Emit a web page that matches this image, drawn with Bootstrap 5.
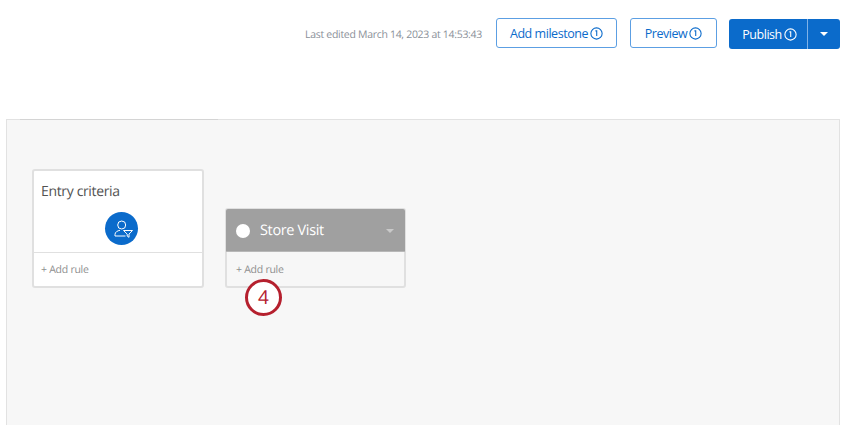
<!DOCTYPE html>
<html lang="en">
<head>
  <meta charset="UTF-8">
  <title>Journey editor</title>
  <link rel="stylesheet" href="https://cdn.jsdelivr.net/npm/bootstrap@5.3.3/dist/css/bootstrap.min.css">
  <style>
    html, body { height: 425px; overflow: hidden; }
    body { background: #fff; font-family: "Open Sans", "Noto Sans", sans-serif; color: #525252; text-rendering: geometricPrecision; }
    .top-bar { height: 119px; padding: 18px 10px 0 0; align-items: flex-start; }
    .edited-text { font-size: 10.5px; letter-spacing: -0.3px; color: #8a9099; margin-right: 14px; line-height: 34px; }
    .tool-btn { height: 30px; padding: 2px 0 0; font-size: 12.5px; letter-spacing: -0.45px; color: #0b6bcb; background: #fff; border: 1px solid #5c9fe3; border-radius: 3px; display: flex; align-items: center; justify-content: center; gap: 2px; }
    .tool-btn:hover { color: #0b6bcb; background: #fff; border-color: #5c9fe3; }
    .info-ico { margin-top: -2px; }
    .btn-milestone { width: 121px; margin-right: 13px; }
    .btn-preview { width: 87px; margin-right: 12px; }
    .publish-group { margin-top: 1px; height: 30px; }
    .publish-main, .publish-caret { background: #0b6bcb; border: 0; color: #fff; height: 30px; font-size: 12.5px; letter-spacing: -0.45px; padding: 2px 0 0; display: flex; align-items: center; justify-content: center; }
    .publish-main:hover, .publish-caret:hover { background: #0b6bcb; color: #fff; }
    .publish-main { width: 79px; gap: 2px; padding-left: 3px; border-radius: 3px 0 0 3px; border-right: 1px solid #7fb2e8; }
    .publish-caret { width: 32px; padding: 0; border-radius: 0 3px 3px 0; }
    .caret-down { width: 0; height: 0; border-left: 4px solid transparent; border-right: 4px solid transparent; border-top: 4px solid #fff; }
    .canvas-area { position: relative; margin: 0 10px 0 6px; height: 306px; background: #f7f7f7; border: 1px solid #e2e2e2; border-bottom: 0; }
    .tab-line { position: absolute; left: 13px; top: -1px; width: 198px; height: 1px; background: #d4d4d4; }
    .flow-node { position: absolute; border: 2px solid #e0e0e0; border-radius: 3px; }
    .node-entry { left: 25px; top: 49px; width: 172px; height: 119px; background: #fff; }
    .node-visit { left: 218px; top: 88px; width: 181px; height: 80px; background: #f7f7f7; }
    .entry-head { height: 82px; padding: 11px 7px 0; border-bottom: 1px solid #e0e0e0; }
    .entry-title { font-size: 14px; letter-spacing: -0.35px; line-height: 20px; color: #525252; }
    .entry-icon { width: 33px; height: 33px; border-radius: 50%; background: #0b6bcb; margin: 10px 0 0 64px; display: flex; align-items: center; justify-content: center; }
    .add-rule { font-size: 10.5px; letter-spacing: -0.26px; color: #8f8f8f; line-height: 16px; padding: 9px 7px 0; }
    .node-visit .add-rule { padding: 10px 9px 0; }
    .visit-head { height: 43px; margin: -1px -1px 0; padding: 2px 10px 0; background: #a0a0a0; border-radius: 2px 2px 0 0; color: #fff; display: flex; align-items: center; border-bottom: 1px solid #b8b8b8; }
    .visit-dot { width: 14px; height: 14px; background: #fff; border-radius: 50%; margin-right: 10px; }
    .visit-title { font-size: 14.5px; letter-spacing: -0.35px; flex-grow: 1; }
    .visit-caret { width: 0; height: 0; border-left: 4px solid transparent; border-right: 4px solid transparent; border-top: 4px solid #c9c9c9; margin-right: 1px; }
    .step-mark { position: absolute; left: 238px; top: 159px; width: 37px; height: 37px; border: 3px solid #b5202e; border-radius: 50%; background: #fff; color: #b5202e; font-size: 19px; font-weight: 500; display: flex; align-items: center; justify-content: center; }
  </style>
</head>
<body>
  <div class="top-bar d-flex justify-content-end">
    <span class="edited-text">Last edited March 14, 2023 at 14:53:43</span>
    <button class="btn tool-btn btn-milestone">Add milestone
      <svg class="info-ico" width="13" height="13" viewBox="0 0 12 12" fill="none" stroke="currentColor"><circle cx="6" cy="6" r="5.2"/><path d="M5 3.6h1.2v4.8"/></svg>
    </button>
    <button class="btn tool-btn btn-preview">Preview
      <svg class="info-ico" width="13" height="13" viewBox="0 0 12 12" fill="none" stroke="currentColor"><circle cx="6" cy="6" r="5.2"/><path d="M5 3.6h1.2v4.8"/></svg>
    </button>
    <div class="d-flex publish-group">
      <button class="btn publish-main">Publish
        <svg class="info-ico" width="13" height="13" viewBox="0 0 12 12" fill="none" stroke="currentColor"><circle cx="6" cy="6" r="5.2"/><path d="M5 3.6h1.2v4.8"/></svg>
      </button>
      <button class="btn publish-caret"><span class="caret-down"></span></button>
    </div>
  </div>
  <div class="canvas-area">
    <div class="tab-line"></div>
    <div class="flow-node node-entry">
      <div class="entry-head">
        <div class="entry-title">Entry criteria</div>
        <div class="entry-icon">
          <svg width="22" height="22" viewBox="0 0 22 22" fill="none" stroke="#fff" stroke-width="1"><circle cx="10.7" cy="7" r="4"/><path d="M4 18v-1.5c0-2.5 2.5-3.8 5-4.2M4 18h10.5"/><path d="M12.5 12.5h9l-3.5 3.6v3.2l-1.8-1.2v-2z"/></svg>
        </div>
      </div>
      <div class="add-rule">+ Add rule</div>
    </div>
    <div class="flow-node node-visit">
      <div class="visit-head">
        <span class="visit-dot"></span>
        <span class="visit-title">Store Visit</span>
        <span class="visit-caret"></span>
      </div>
      <div class="add-rule">+ Add rule</div>
    </div>
    <div class="step-mark">4</div>
  </div>
  <script src="https://cdn.jsdelivr.net/npm/bootstrap@5.3.3/dist/js/bootstrap.bundle.min.js"></script>
</body>
</html>
